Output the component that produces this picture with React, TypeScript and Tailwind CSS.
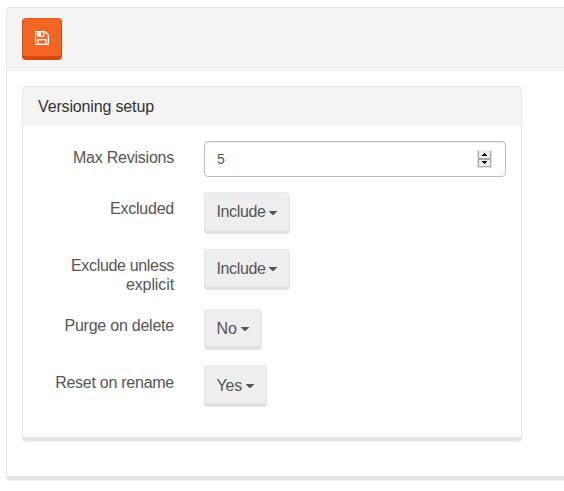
import React from 'react';

function Caret({ className }: { className: string }) {
  return (
    <svg className={`shrink-0 ${className}`} width="8" height="4" viewBox="0 0 8 4" aria-hidden="true">
      <path d="M0 0h8v.5L4.5 4h-1L0 .5z" fill="currentColor" />
    </svg>
  );
}

interface DropdownButtonProps {
  label: string;
  className: string;
  caretClassName?: string;
}

function DropdownButton({ label, className, caretClassName = 'ml-1 mt-px' }: DropdownButtonProps) {
  return (
    <button
      type="button"
      className={`flex items-center rounded border border-b-4 border-[#e2e2e2] border-t-[#e9e9e9] bg-[#eeeeee] pl-[11.5px] text-base leading-none text-[#555555] ${className}`}
    >
      <span>{label}</span>
      <Caret className={caretClassName} />
    </button>
  );
}

interface RowProps {
  label: React.ReactNode;
  className: string;
  labelClassName?: string;
  children: React.ReactNode;
}

function Row({ label, className, labelClassName = 'pt-[7px] tracking-[-0.23px]', children }: RowProps) {
  return (
    <div className={`flex items-start ${className}`}>
      <div
        className={`mr-[30px] w-[136px] shrink-0 text-right text-base leading-[19px] text-[#555555] ${labelClassName}`}
      >
        {label}
      </div>
      {children}
    </div>
  );
}

function SaveIcon() {
  return (
    <svg width="14" height="14" viewBox="0 128 1536 1536" fill="white" stroke="white" strokeWidth="24" aria-hidden="true">
      <path d="M384 1536h768v-384h-768v384zm896 0h128v-896q0-14-10-38.5t-20-34.5l-281-281q-10-10-34-20t-39-10v416q0 40-28 68t-68 28h-576q-40 0-68-28t-28-68v-416h-128v1280h128v-416q0-40 28-68t68-28h832q40 0 68 28t28 68v416zm-384-928v-320q0-13-9.5-22.5t-22.5-9.5h-192q-13 0-22.5 9.5t-9.5 22.5v320q0 13 9.5 22.5t22.5 9.5h192q13 0 22.5-9.5t9.5-22.5zm640 32v928q0 40-28 68t-68 28h-1344q-40 0-68-28t-28-68v-1344q0-40 28-68t68-28h928q40 0 88 20t76 48l280 280q28 28 48 76t20 88z" />
    </svg>
  );
}

function Stepper() {
  return (
    <svg width="15" height="18" viewBox="0 0 15 18" shapeRendering="crispEdges" aria-hidden="true">
      <path d="M0 0h15v18H0z" fill="#e3e3e3" />
      <path d="M1 0h13v8H1zM1 10h13v6H1z" fill="#ededed" />
      <path d="M1 1h1v16H1zM13 1h1v16h-1zM1 8h13v2H1zM1 16h13v1H1z" fill="#a9a9a9" />
      <path d="M7 3h1v1h1v1h1v1H5V5h1V4h1zM5 11h5v1H9v1H8v1H7v-1H6v-1H5z" fill="#000" />
    </svg>
  );
}

export default function App() {
  return (
    <div className="h-[491px] w-full overflow-hidden bg-white pl-1.5 pt-[7px] font-['Liberation_Sans',Arial,sans-serif]">
      <main className="h-[473px] w-[600px] rounded border border-b-4 border-[#e6e6e6] bg-white shadow-[0_1px_1px_rgba(0,0,0,0.05)]">
        <header className="h-[63px] rounded-t-[3px] bg-[#f4f4f4] pl-[15px] pt-2.5">
          <button
            type="button"
            aria-label="Save"
            className="flex h-[42px] w-10 items-center justify-center rounded border border-b-4 border-[#d9490c] border-t-[#e95b1f] bg-[#f26522]"
          >
            <SaveIcon />
          </button>
        </header>
        <section className="ml-[15px] mt-[15px] h-[355px] w-[500px] rounded border border-b-4 border-[#e6e6e6] shadow-[0_1px_1px_rgba(0,0,0,0.05)]">
          <h1 className="flex h-[39px] items-center rounded-t-[3px] bg-[#f4f4f4] pl-[15px] text-base tracking-[-0.15px] text-[#333333]">
            Versioning setup
          </h1>
          <div className="pl-[15px] pt-[15px]">
            <Row label="Max Revisions" className="h-[51px]">
              <div className="flex h-9 w-[302px] items-center justify-between rounded border border-[#bbbbbb] pl-3 pr-[13px] text-sm text-[#555555] shadow-[inset_0_1px_1px_rgba(0,0,0,0.075)]">
                <span>5</span>
                <Stepper />
              </div>
            </Row>
            <Row label="Excluded" className="h-[57px]">
              <DropdownButton
                label="Include"
                className="h-[42px] w-[86px] tracking-[-0.38px]"
                caretClassName="ml-1 mt-[3px]"
              />
            </Row>
            <Row
              label={
                <>
                  Exclude unless <span className="tracking-[-0.1px]">explicit</span>
                </>
              }
              className="h-[60px]"
              labelClassName="pt-[7px] tracking-[-0.33px]"
            >
              <DropdownButton label="Include" className="h-[41px] w-[86px] pt-px tracking-[-0.38px]" />
            </Row>
            <Row label="Purge on delete" className="h-14">
              <DropdownButton label="No" className="h-[41px] w-[58px] pt-px" />
            </Row>
            <Row label="Reset on rename" className="h-[42px]" labelClassName="pt-2 tracking-[-0.26px]">
              <DropdownButton
                label="Yes"
                className="h-[42px] w-[63px] pt-0.5 tracking-[-0.2px]"
              />
            </Row>
          </div>
        </section>
      </main>
    </div>
  );
}
